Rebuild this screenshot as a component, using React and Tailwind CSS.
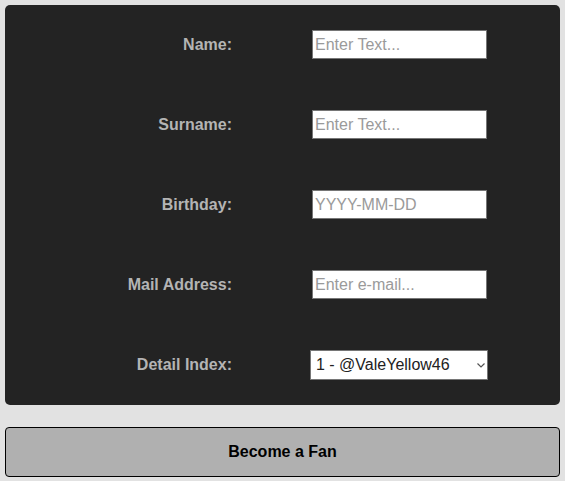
import React, { useState } from 'react';

const fields = [
  { label: 'Name:', placeholder: 'Enter Text...' },
  { label: 'Surname:', placeholder: 'Enter Text...' },
  { label: 'Birthday:', placeholder: 'YYYY-MM-DD' },
  { label: 'Mail Address:', placeholder: 'Enter e-mail...' },
];

export default function App() {
  const [detail, setDetail] = useState('1');

  return (
    <div className="min-h-[481px] bg-[#e2e2e2] p-[5px] font-['Liberation_Sans',Arial,sans-serif]">
      <div className="flex flex-col gap-[51px] rounded-[5px] bg-[#232323] pt-[25px] pb-[25px]">
        {fields.map((f) => (
          <div key={f.label} className="flex items-center gap-[80px]">
            <label className="w-[227px] text-right text-base font-bold text-[#b4b4b4]">{f.label}</label>
            <input
              type="text"
              placeholder={f.placeholder}
              className="h-[29px] w-[175px] border border-[#767676] bg-white px-[2px] text-base text-black placeholder:text-[#9a9a9a] outline-none"
            />
          </div>
        ))}
        <div className="flex items-center gap-[78px]">
          <label className="w-[227px] text-right text-base font-bold text-[#b4b4b4]">Detail Index:</label>
          <div className="relative">
            <select
              value={detail}
              onChange={(e) => setDetail(e.target.value)}
              className="h-[30px] w-[178px] appearance-none border border-[#767676] bg-white pl-[5px] text-base text-[#222] outline-none"
            >
              <option value="1">1 - @ValeYellow46</option>
            </select>
            <svg
              className="pointer-events-none absolute right-[3px] top-[13px] h-[5px] w-[8px]"
              viewBox="0 0 8 5"
              fill="none"
              stroke="#555"
              strokeWidth="1.2"
            >
              <path d="M0.5 0.5 L4 4 L7.5 0.5" />
            </svg>
          </div>
        </div>
      </div>
      <button className="mt-[22px] h-[50px] w-full rounded-[4px] border border-black bg-[#b0b0b0] text-base font-bold text-black">
        Become a Fan
      </button>
    </div>
  );
}
